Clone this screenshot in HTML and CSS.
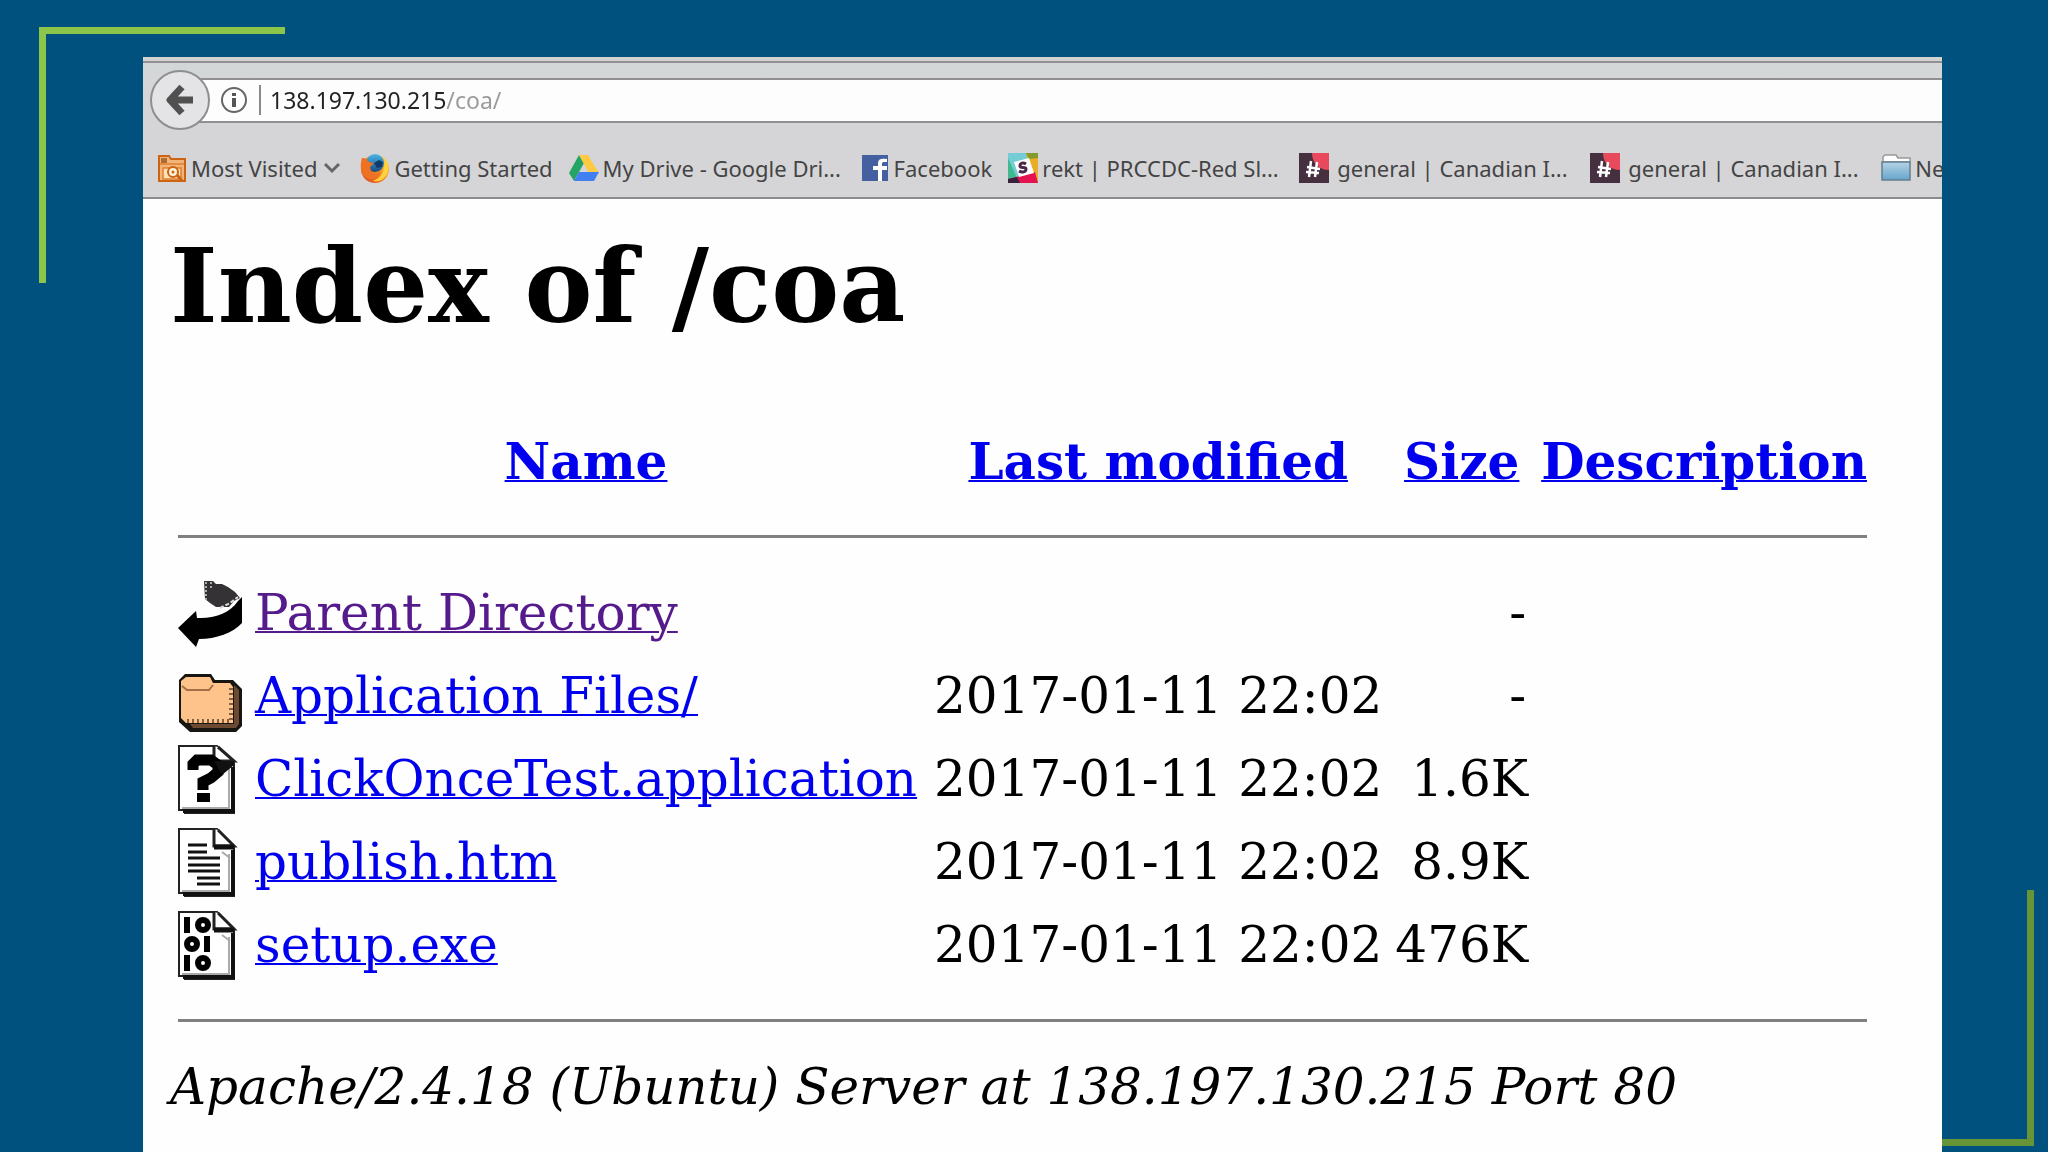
FILE: index.html
```html
<!DOCTYPE html>
<html lang="en">
<head>
<meta charset="utf-8">
<title>Index of /coa</title>
<link rel="stylesheet" href="styles.css">
</head>
<body>
<div class="corner corner-top"></div>
<div class="corner corner-bottom"></div>
<div class="browser">
  <header class="chrome">
    <div class="urlbar">
      <button class="back" type="button" aria-label="Back">
        <svg width="28" height="32" viewBox="0 0 28 32"><path d="M16 3 4 16l12 13M5 16h22" fill="none" stroke="#505050" stroke-width="7" stroke-linejoin="round"/></svg>
      </button>
      <div class="field">
        <svg class="info" width="28" height="28" viewBox="0 0 28 28"><circle cx="14" cy="14" r="12" fill="none" stroke="#666" stroke-width="2"/><path d="M12 7h4v3h-4zM12 12h4v9h-4z" fill="#555"/></svg>
        <input class="url" type="text" aria-label="Address" value="138.197.130.215/coa/">
      </div>
    </div>
    <nav class="bookmarks">
      <a href="#" class="mark most">
        <svg class="fav" viewBox="0 0 30 30"><path d="M2 3h10l2 3h14v22H2z" fill="#f3b477" stroke="#cc6414" stroke-width="2"/><path d="M4 5h6v5H4z" fill="#ad6b35"/><path d="M3 11h24M6 15h18v11H6z" fill="#ffe1b5" stroke="#dc8134" stroke-width="1.5"/><circle cx="16" cy="19" r="5" fill="#fff1da" stroke="#cc6414" stroke-width="2"/><circle cx="16" cy="19" r="1.5" fill="#cc6414"/><path d="m20 22 5 6" stroke="#cc6414" stroke-width="3"/></svg>
        <span>Most Visited</span>
        <svg class="chevron" width="18" height="12" viewBox="0 0 18 12"><path d="m2 2 7 7 7-7" fill="none" stroke="#666" stroke-width="3"/></svg>
      </a>
      <a href="#" class="mark">
        <svg class="fav" viewBox="0 0 30 30"><defs><linearGradient id="fox" x1="0" y1="1" x2="1" y2="0"><stop offset="0" stop-color="#d93a20"/><stop offset=".5" stop-color="#f38a1e"/><stop offset="1" stop-color="#ffe34d"/></linearGradient><linearGradient id="globe" x1="0" y1="0" x2="0" y2="1"><stop offset="0" stop-color="#4cb7e8"/><stop offset="1" stop-color="#174a82"/></linearGradient></defs><circle cx="15" cy="16" r="14" fill="url(#fox)"/><circle cx="15" cy="10" r="9" fill="url(#globe)"/><path d="M2 5c4 0 5 2 7 4l5 1-4 4 1 4c2 3 6 3 10 1-2 7-11 9-16 5C0 20 0 11 2 5z" fill="#ee7224"/><path d="M24 5c6 6 5 15 1 19-3 4-8 5-12 4 9-3 13-12 11-23z" fill="#ffd23e"/><path d="m14 10 5-3 4 2-1 5-5 1z" fill="#103a68"/></svg>
        <span>Getting Started</span>
      </a>
      <a href="#" class="mark clipped">
        <svg class="fav" viewBox="0 0 30 30"><path d="M10 2 0 20l5 8 10-18z" fill="#25a565"/><path d="M10 2h9l11 18H20z" fill="#fdca41"/><path d="M10 19h20l-5 9H5z" fill="#427ff0"/></svg>
        <span>My Drive - Google Dri...</span>
      </a>
      <a href="#" class="mark">
        <svg class="fav" viewBox="0 0 30 30"><path d="M2 2h26v26H2z" fill="#4460a0"/><path d="M18 28V17h-5v-4h5v-3c0-4 3-5 9-4v3c-4 0-5 0-5 2v2h5v4h-5v11z" fill="#fff"/></svg>
        <span>Facebook</span>
      </a>
      <a href="#" class="mark clipped">
        <svg class="fav" viewBox="0 0 30 30"><path d="M0 0h30v30H0z" fill="#74ccd5"/><path d="m0 5 9 20-9 1z" fill="#3fb98f"/><path d="M18 0h12v30l-9-17z" fill="#e9ad27"/><path d="M18 0h12v5l-9 1z" fill="#839b2c"/><path d="m0 26 27-7 3 11H0z" fill="#e31352"/><path d="m0 26 9-2 3 6H0z" fill="#36203c"/><path d="m6 9 15-4 5 15-15 4z" fill="#fff"/><path d="M18 11c-3-2-6-1-6 2s6 0 6 3-4 4-7 2" fill="none" stroke="#4a2849" stroke-width="3"/></svg>
        <span>rekt | PRCCDC-Red Sl...</span>
      </a>
      <a href="#" class="mark clipped general">
        <svg class="fav" viewBox="0 0 30 30"><path d="M0 0h30v30H0z" fill="#46303f"/><path d="M13 0h17v17c-10 0-17-7-17-17z" fill="#e8495c"/><path d="m12 8-2 16m8-15-2 15M8 14l13 2M7 19l13 1" stroke="#fff" stroke-width="2.5"/></svg>
        <span>general | Canadian I...</span>
      </a>
      <a href="#" class="mark clipped general">
        <svg class="fav" viewBox="0 0 30 30"><path d="M0 0h30v30H0z" fill="#46303f"/><path d="M13 0h17v17c-10 0-17-7-17-17z" fill="#e8495c"/><path d="m12 8-2 16m8-15-2 15M8 14l13 2M7 19l13 1" stroke="#fff" stroke-width="2.5"/></svg>
        <span>general | Canadian I...</span>
      </a>
      <a href="#" class="mark">
        <svg class="fav" viewBox="0 0 30 30"><defs><linearGradient id="blue" x1="0" y1="0" x2="0" y2="1"><stop offset="0" stop-color="#b5d3e6"/><stop offset="1" stop-color="#66a6cb"/></linearGradient></defs><path d="M2 6V4l2-2h11l2 3h12v4H2z" fill="#fff" stroke="#999" stroke-width="1.5"/><path d="M1 9h28v18H1z" fill="url(#blue)" stroke="#637f91" stroke-width="1.5"/></svg>
        <span>Ne</span>
      </a>
    </nav>
  </header>
  <main class="page">
    <h1>Index of /coa</h1>
    <table class="listing">
      <thead>
        <tr><th></th><th class="name"><a href="#">Name</a></th><th><a href="#">Last modified</a></th><th><a href="#">Size</a></th><th><a href="#">Description</a></th></tr>
        <tr><td colspan="5"><hr class="rule-top"></td></tr>
      </thead>
      <tbody>
        <tr class="file">
          <td><svg class="icon" viewBox="0 0 64 70"><path d="M26 2h9l3 3h6l6 3 7 5 5 6-6 3-5 6H38l-6-4-5-4z" fill="#343234"/><path d="M28 3v20M33 3v6" stroke="#aaa" stroke-width="2" stroke-dasharray="2 2"/><path d="m42 29 10-5 8-6" fill="none" stroke="#ddd" stroke-width="2" stroke-dasharray="4 2"/><path d="m0 49 18-17 1 7c16 1 32-4 41-17l4-4v26c-9 10-26 16-43 16l-3 8z" fill="#000"/></svg></td>
          <td class="name"><a class="visited" href="#">Parent Directory</a></td><td></td><td class="size"><span class="dash">-</span></td><td></td>
        </tr>
        <tr class="file">
          <td><svg class="icon" viewBox="0 0 64 70"><path d="m1 18 6-6h26l4 6h18l9 9v37l-6 6H12L1 60z" fill="#171512"/><path d="M56 23v39H12l3 4h43l3-4V28z" fill="#6c4a31"/><path d="m3 19 5-4h24l3 6h17l3 4v36H8l-5-5z" fill="#fdc38b"/><path d="m4 24 5 4h22l4-5" fill="none" stroke="#a37046" stroke-width="2"/><path d="M53 26v33M9 59h45" fill="none" stroke="#89603e" stroke-width="4" stroke-dasharray="2 3"/></svg></td>
          <td class="name"><a href="#">Application Files/</a></td><td>2017-01-11 22:02</td><td class="size"><span class="dash">-</span></td><td></td>
        </tr>
        <tr class="file">
          <td><svg class="icon" viewBox="0 0 64 70"><path d="M1 1h38l17 17v50H7v-3H1z" fill="#fff" stroke="#222" stroke-width="2"/><path d="M55 22v44H5" fill="none" stroke="#111" stroke-width="4"/><path d="M51 22v41H4" fill="none" stroke="#aaa" stroke-width="2"/><path d="M36 1v15h20L40 2" fill="#fff" stroke="#222" stroke-width="3"/><path d="M15 25v-6l4-4h14l7 5v7l-7 6-8 4v8" fill="none" stroke="#000" stroke-width="11"/><path d="M36 16h20v4l-12 10z" fill="#111"/><path d="M19 48h13v9H19z"/></svg></td>
          <td class="name"><a href="#">ClickOnceTest.application</a></td><td>2017-01-11 22:02</td><td class="size">1.6K</td><td></td>
        </tr>
        <tr class="file">
          <td><svg class="icon" viewBox="0 0 64 70"><path d="M1 1h38l17 17v50H7v-3H1z" fill="#fff" stroke="#222" stroke-width="2"/><path d="M55 22v44H5" fill="none" stroke="#111" stroke-width="4"/><path d="M51 26v37H4M44 24l8 6" fill="none" stroke="#aaa" stroke-width="2"/><path d="M36 1v17h20L40 2" fill="#fff" stroke="#222" stroke-width="3"/><path d="M36 19h20" stroke="#111" stroke-width="5"/><path d="M10 17h19M10 24h19M10 30h32M10 37h32M10 43h32M19 50h23M19 56h23" stroke="#111" stroke-width="3"/></svg></td>
          <td class="name"><a href="#">publish.htm</a></td><td>2017-01-11 22:02</td><td class="size">8.9K</td><td></td>
        </tr>
        <tr class="file">
          <td><svg class="icon" viewBox="0 0 64 70"><path d="M1 1h38l17 17v50H7v-3H1z" fill="#fff" stroke="#222" stroke-width="2"/><path d="M55 22v44H5" fill="none" stroke="#111" stroke-width="4"/><path d="M51 26v37H4M44 24l8 6" fill="none" stroke="#aaa" stroke-width="2"/><path d="M36 1v17h20L40 2" fill="#fff" stroke="#222" stroke-width="3"/><path d="M36 19h20" stroke="#111" stroke-width="5"/><path d="M9 6v16M29 25v16M9 44v16" stroke="#000" stroke-width="6"/><g fill="none" stroke="#000" stroke-width="6"><ellipse cx="25" cy="14" rx="5" ry="5"/><ellipse cx="14" cy="33" rx="5" ry="5"/><ellipse cx="25" cy="52" rx="5" ry="5"/></g></svg></td>
          <td class="name"><a href="#">setup.exe</a></td><td>2017-01-11 22:02</td><td class="size">476K</td><td></td>
        </tr>
        <tr><td colspan="5"><hr class="rule-bottom"></td></tr>
      </tbody>
    </table>
    <address>Apache/2.4.18 (Ubuntu) Server at 138.197.130.215 Port 80</address>
  </main>
</div>
</body>
</html>
```
FILE: styles.css
```css
* { box-sizing: border-box; }

body {
  margin: 0;
  min-height: 100vh;
  padding: 57px 106px 0 143px;
  display: flex;
  position: relative;
  background: #00517d;
}

/* Green brackets in two corners of the slide */
.corner {
  position: absolute;
  width: 246px;
  height: 256px;
}
.corner-top {
  left: 39px;
  top: 27px;
  border-top: 7px solid #8bc64a;
  border-left: 7px solid #8bc64a;
}
.corner-bottom {
  right: 14px;
  bottom: 6px;
  border-right: 7px solid #679436;
  border-bottom: 7px solid #679436;
}

.browser {
  flex: 1;
  min-width: 0;
  position: relative;
  display: flex;
  flex-direction: column;
  overflow: hidden;
  background: #fefefe;
}

.chrome {
  height: 142px;
  padding-top: 13px;
  background: linear-gradient(#d3d3d3 4px, #929090 4px, #929090 6px, #d3d7d8 6px, #d5d5d7 40px);
  border-bottom: 2px solid #8b8b8f;
  font-family: "Noto Sans", sans-serif;
  font-size: 22px;
  color: #444;
}

.urlbar {
  display: flex;
  align-items: center;
  padding-left: 7px;
}
.back {
  width: 60px;
  height: 60px;
  padding: 0;
  display: flex;
  align-items: center;
  justify-content: center;
  z-index: 1;
  border: 2px solid #8e8e8e;
  border-radius: 50%;
  background: #e4e4e6;
}
.field {
  flex: 1;
  height: 45px;
  margin-left: -12px;
  padding-left: 22px;
  display: flex;
  align-items: center;
  border: 2px solid #909090;
  border-width: 2px 0;
  background: #fdfdfe;
}
.info { margin-right: 11px; }
.url {
  flex: 1;
  height: 30px;
  padding: 0 0 0 9px;
  border: 0;
  border-left: 2px solid #888;
  outline: 0;
  font: inherit;
  font-size: 23px;
  /* host dark, path grey */
  color: transparent;
  background: linear-gradient(to right, #222 185px, #999 185px);
  background-clip: text;
  -webkit-background-clip: text;
}

.bookmarks {
  display: flex;
  align-items: center;
  gap: 16px;
  height: 62px;
  margin-top: 7px;
  padding-left: 14px;
  white-space: nowrap;
}
.mark {
  flex: none;
  display: flex;
  align-items: center;
  gap: 4px;
  color: inherit;
  text-decoration: none;
}
.most { padding-right: 3px; }
.chevron { margin-left: 2px; }
.fav {
  width: 30px;
  height: 30px;
  flex: none;
}
/* long titles share one width */
.clipped { width: 275px; }
.general { gap: 8px; }

.page {
  flex: 1;
  padding: 29px 75px 0 27px;
  font-family: "DejaVu Serif", serif;
  font-size: 50px;
  line-height: 59px;
  color: #000;
}
h1 {
  margin: 0 0 87px;
  font-size: 102px;
  line-height: 117px;
}
.listing {
  width: calc(100% - 8px);
  margin-left: 8px;
  border-spacing: 0;
}
.listing th, .listing td {
  padding: 0 13px 0 0;
  text-align: left;
  white-space: nowrap;
}
.listing th { text-align: center; }
.listing .name { padding-right: 17px; }
.listing th:last-child, .listing td:last-child { padding-right: 0; }
.listing .size { text-align: right; }
.dash { margin-right: 2px; }
.file { height: 83px; }
.icon {
  display: block;
  width: 64px;
  height: 70px;
}
a { color: #0000ee; text-decoration-thickness: 2px; }
.visited { color: #551a8b; }
hr {
  height: 3px;
  border: 0;
  background: #808080;
}
.rule-top { margin: 44px 0 34px; }
.rule-bottom { margin: 32px 0 36px; }
```
